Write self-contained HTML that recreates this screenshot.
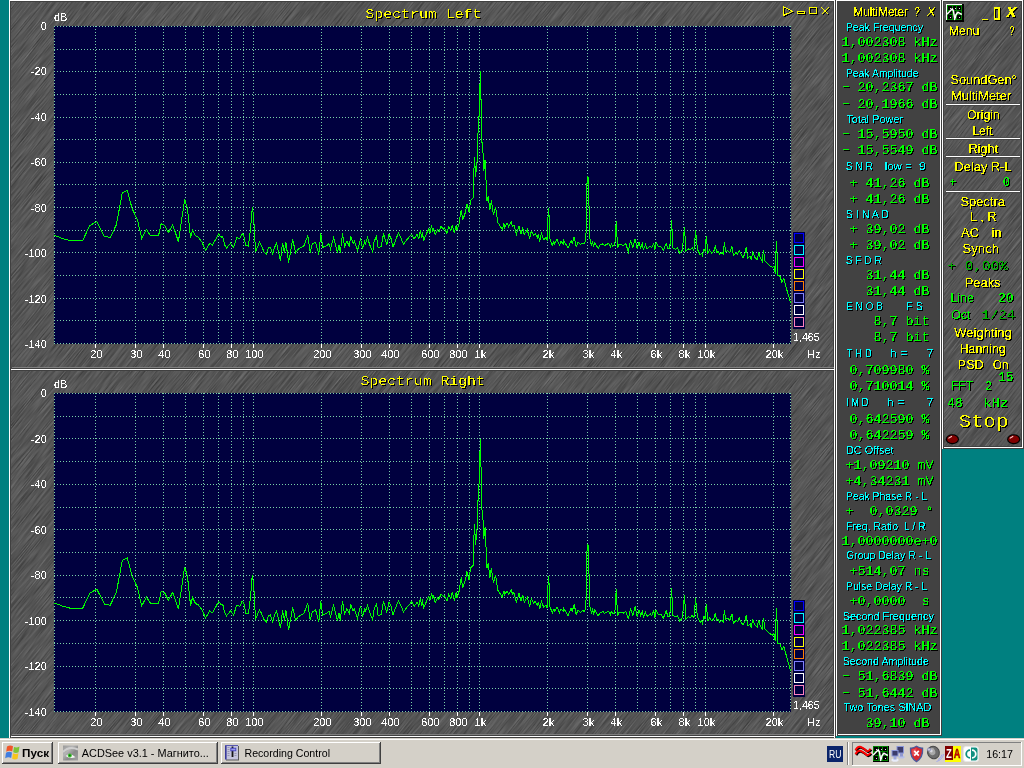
<!DOCTYPE html>
<html lang="ru"><head><meta charset="utf-8"><title>Spectrum Analyzer</title>
<style>
html,body{margin:0;padding:0;background:#008080;overflow:hidden}
svg{display:block}
text{font-family:"Liberation Sans", Arial, sans-serif;white-space:pre}
.grid{stroke:#7ad0a8;stroke-width:1;stroke-dasharray:1 2;fill:none;shape-rendering:crispEdges}
.trace{stroke:#00ff00;stroke-width:1;fill:none;shape-rendering:crispEdges;stroke-linejoin:miter}
.axl{font-size:11px;fill:#fff}
.ttl{font-family:"Liberation Mono", "Courier New", monospace;font-size:12.5px;fill:#ffff00}
.y12{font-size:12.6px;fill:#ffff00;stroke:#ffff00;stroke-width:0.15px}
.yi{font-size:12px;fill:#ffff00;font-style:italic}
.yib{font-size:14px;fill:#ffff00;font-style:italic;font-weight:bold;stroke:#ffff00;stroke-width:0.3px}
.cy{font-size:10.67px;fill:#00ffff}
.gm{font-family:"Liberation Mono", "Courier New", monospace;font-size:12.2px;fill:#00ff00;stroke:#00ff00;stroke-width:0.2px}
.ga{font-size:12.6px;fill:#00ff00;stroke:#00ff00;stroke-width:0.15px}
.gd{font-family:"Liberation Mono", "Courier New", monospace;font-size:13.1px;fill:#00b000;stroke:#00b000;stroke-width:0.2px}
.gc{font-family:"Liberation Mono", "Courier New", monospace;font-size:13.1px;fill:#00ff00;stroke:#00ff00;stroke-width:0.2px}
.stop{font-family:"Liberation Mono", "Courier New", monospace;font-size:18.5px;fill:#ffff00}
.tb{font-family:"Liberation Sans",Tahoma,sans-serif;font-size:11.5px;fill:#000}
.tbb{font-family:"Liberation Sans",Tahoma,sans-serif;font-size:11.5px;font-weight:bold;fill:#000}
</style></head><body>
<svg width="1024" height="768" viewBox="0 0 1024 768">
<defs>
<filter id="sh" x="-5%" y="-20%" width="115%" height="150%" color-interpolation-filters="sRGB"><feComponentTransfer in="SourceGraphic" result="t"><feFuncA type="discrete" tableValues="0 0 0 0 0 0 0 0 0 0 0 0 0 0 0 0 0 0 0 0 0 0 0 0 0 0 0 0 0 1 1 1 1 1 1 1 1 1 1 1 1 1 1 1 1 1 1 1 1 1"/></feComponentTransfer><feOffset in="t" dx="1" dy="1" result="o"/><feColorMatrix in="o" type="matrix" values="0 0 0 0 0  0 0 0 0 0  0 0 0 0 0  0 0 0 1 0" result="s"/><feMerge><feMergeNode in="s"/><feMergeNode in="t"/></feMerge></filter>
<filter id="sh5" x="-5%" y="-20%" width="115%" height="150%" color-interpolation-filters="sRGB"><feComponentTransfer in="SourceGraphic" result="t"><feFuncA type="discrete" tableValues="0 1"/></feComponentTransfer><feOffset in="t" dx="1" dy="1" result="o"/><feColorMatrix in="o" type="matrix" values="0 0 0 0 0  0 0 0 0 0  0 0 0 0 0  0 0 0 1 0" result="s"/><feMerge><feMergeNode in="s"/><feMergeNode in="t"/></feMerge></filter>
<filter id="sh2" x="-5%" y="-20%" width="115%" height="150%" color-interpolation-filters="sRGB"><feComponentTransfer in="SourceGraphic" result="t"><feFuncA type="discrete" tableValues="0 0 0 1 1"/></feComponentTransfer><feOffset in="t" dx="1" dy="1" result="o"/><feColorMatrix in="o" type="matrix" values="0 0 0 0 0  0 0 0 0 0  0 0 0 0 0  0 0 0 1 0" result="s"/><feMerge><feMergeNode in="s"/><feMergeNode in="t"/></feMerge></filter>
<filter id="tex" x="0" y="0" width="100%" height="100%" color-interpolation-filters="sRGB"><feTurbulence type="fractalNoise" baseFrequency="0.035 1.1" numOctaves="2" seed="7" result="n"/><feColorMatrix type="matrix" values="0.3 0 0 0 0.185  0.3 0 0 0 0.185  0.3 0 0 0 0.185  0 0 0 0 1"/></filter>
<filter id="np" x="-5%" y="-5%" width="110%" height="110%"><feComponentTransfer><feFuncA type="discrete" tableValues="0 1"/></feComponentTransfer></filter>
<filter id="nt" x="-2%" y="-10%" width="104%" height="120%"><feOffset dx="0" dy="0"/></filter>
<clipPath id="cw"><rect x="11" y="2" width="823" height="736"/></clipPath>
<clipPath id="cc"><rect x="944" y="2" width="78" height="445"/></clipPath>
</defs>
<rect width="1024" height="768" fill="#008080"/>
<rect x="9" y="0" width="827" height="738" fill="#404040"/>
<rect x="11" y="2" width="822" height="736" fill="#5a5a5a"/>
<g clip-path="url(#cw)"><rect x="-190" y="-240" width="1224" height="1224" transform="rotate(-51 422 370)" fill="#000" filter="url(#tex)" opacity="1"/></g>
<path d="M9.5 738V0.5H834.5V738" stroke="#fff" fill="none" shape-rendering="crispEdges"/>
<path d="M11 1.5H834M10.5 1V738M833.5 1V738M835.5 0V738" stroke="#404040" fill="none" shape-rendering="crispEdges"/>
<rect x="12" y="367" width="822" height="1" fill="#808080"/>
<rect x="12" y="368" width="822" height="1" fill="#404040"/>
<rect x="11" y="369" width="823" height="1" fill="#fff"/>
<rect x="12" y="370" width="822" height="1" fill="#404040"/>
<rect x="12" y="734" width="822" height="1" fill="#808080"/>
<rect x="12" y="735" width="822" height="1" fill="#404040"/>
<rect x="11" y="736" width="823" height="1" fill="#fff"/>
<rect x="12" y="737" width="822" height="1" fill="#404040"/>
<rect x="54" y="26" width="737" height="318" fill="#00003f"/>
<path class="grid" d="M54 26.5H791M54 49.5H791M54 71.5H791M54 94.5H791M54 117.5H791M54 139.5H791M54 162.5H791M54 184.5H791M54 207.5H791M54 230.5H791M54 252.5H791M54 275.5H791M54 298.5H791M54 320.5H791M54 343.5H791"/>
<path class="grid" d="M54.5 26V343M95.5 26V343M135.5 26V343M163.5 26V343M185.5 26V343M203.5 26V343M218.5 26V343M231.5 26V343M243.5 26V343M253.5 26V343M321.5 26V343M361.5 26V343M389.5 26V343M411.5 26V343M429.5 26V343M444.5 26V343M457.5 26V343M469.5 26V343M479.5 26V343M547.5 26V343M587.5 26V343M615.5 26V343M637.5 26V343M655.5 26V343M670.5 26V343M683.5 26V343M695.5 26V343M705.5 26V343M773.5 26V343M790.5 26V343"/>
<path d="M95.5 344V348M135.5 344V348M163.5 344V348M203.5 344V348M231.5 344V348M253.5 344V348M321.5 344V348M361.5 344V348M389.5 344V348M429.5 344V348M457.5 344V348M479.5 344V348M547.5 344V348M587.5 344V348M615.5 344V348M655.5 344V348M683.5 344V348M705.5 344V348M773.5 344V348" stroke="#fff" stroke-width="1" shape-rendering="crispEdges" fill="none"/>
<polyline class="trace" points="54.4,235.3 63.3,238.8 69.5,240.3 82.8,240.3 89.8,225.5 96.9,221.6 104.4,236.4 110.2,237.5 116.4,224.7 122.3,192.7 127.3,190.3 132.0,208.3 137.5,220.0 141.7,238.3 146.4,229.4 150.3,235.3 158.6,235.3 161.2,223.6 164.8,225.5 168.4,232.5 172.7,224.7 178.4,241.6 184.7,199.4 187.5,209.0 190.6,238.3 192.5,229.7 195.6,236.0 198.1,236.9 202.3,242.7 205.5,250.5 209.7,243.4 212.5,245.0 218.8,233.8 221.0,237.2 222.7,236.4 224.7,245.0 226.6,248.1 230.5,243.1 233.6,247.3 236.7,237.5 239.8,238.8 242.2,233.3 243.8,235.6 245.8,245.5 248.4,246.1 250.5,229.4 252.3,207.2 253.4,215.3 254.2,226.2 255.5,252.0 259.4,242.2 261.2,245.0 264.0,252.0 266.4,254.4 268.3,248.1 270.3,247.3 272.7,254.4 274.2,248.1 276.6,243.4 280.5,260.6 282.5,242.7 284.4,252.8 285.9,242.2 288.6,262.5 292.7,239.5 295.6,252.8 298.4,248.9 303.9,245.8 307.8,235.6 310.2,252.5 312.2,244.2 315.6,242.2 318.8,254.4 320.8,233.3 322.7,247.3 326.6,245.8 328.9,243.4 330.5,248.9 333.6,237.5 337.5,252.8 339.1,245.0 340.3,252.8 342.5,233.3 344.5,246.6 346.9,241.1 349.2,245.8 350.8,236.4 353.1,243.4 354.4,241.1 357.5,250.5 360.6,238.4 362.5,248.9 364.8,241.1 365.6,243.4 367.5,237.5 369.5,244.2 372.7,252.0 374.2,241.1 376.6,236.4 378.1,248.1 381.2,246.6 383.6,233.3 386.7,245.0 389.1,234.1 390.9,238.0 393.0,247.3 396.1,238.8 398.4,233.3 400.8,237.5 403.4,244.2 407.0,239.5 411.7,234.1 414.1,238.8 417.2,234.4 418.8,238.8 420.3,230.6 421.9,238.0 422.7,231.7 423.4,241.1 426.6,233.3 428.9,228.6 430.0,232.5 431.6,225.5 432.8,231.7 433.6,227.8 435.2,234.8 437.5,230.2 439.0,231.7 440.9,226.6 443.8,229.4 444.5,228.1 446.9,233.3 448.8,226.6 450.8,230.9 452.3,224.7 454.4,233.3 456.2,224.7 457.0,230.2 458.9,224.7 461.2,209.8 462.8,220.0 465.6,211.9 466.9,203.6 469.0,212.2 470.6,200.5 473.4,197.5 473.5,177.2 474.6,156.7 475.5,177.2 476.9,163.5 477.5,154.7 478.4,117.6 479.3,116.0 480.3,71.5 481.2,106.9 481.6,107.0 481.8,142.0 482.7,144.0 483.7,171.3 485.1,159.6 485.7,179.1 486.6,181.1 487.0,200.6 488.3,195.8 489.8,210.3 491.4,200.5 493.4,215.3 495.6,207.5 497.7,222.3 502.3,229.4 503.9,223.4 504.7,227.3 507.0,223.1 508.6,226.6 511.2,221.9 512.5,226.6 514.0,225.0 516.4,234.4 519.0,225.8 521.0,233.6 522.7,227.3 524.2,234.4 527.3,229.7 529.7,239.0 531.2,231.2 533.6,235.2 535.2,233.6 537.5,237.5 538.3,234.4 539.8,241.4 541.4,233.6 543.8,239.8 546.0,237.5 547.3,240.6 547.7,221.9 548.6,208.1 549.4,221.9 549.7,238.3 552.3,245.3 553.9,241.4 554.7,243.8 557.0,239.0 559.4,245.3 560.9,241.4 563.3,243.8 563.8,240.6 565.6,243.8 568.0,248.1 571.1,240.6 572.2,243.8 574.2,236.7 576.2,246.9 578.1,242.2 580.5,244.5 582.8,243.0 584.4,243.8 585.9,239.8 586.4,207.8 587.2,176.6 588.8,178.1 589.0,206.2 589.8,238.3 591.4,245.3 592.5,242.2 593.8,246.1 594.8,242.5 598.1,248.4 600.0,245.0 603.1,243.8 604.4,245.6 608.6,243.4 610.6,247.2 611.2,243.8 612.8,246.1 614.8,245.3 615.6,234.4 616.2,221.1 616.9,234.4 617.5,248.4 619.0,244.5 623.4,245.3 625.8,243.8 628.4,251.6 630.5,240.3 632.8,247.7 635.2,238.8 637.2,249.2 639.0,242.2 640.6,247.7 642.3,243.9 643.4,249.4 645.5,244.7 647.0,248.6 650.2,246.2 651.7,247.8 653.8,243.1 654.8,250.2 656.1,242.3 658.0,246.2 661.1,247.0 663.4,250.2 666.2,243.4 668.1,249.0 669.7,248.6 670.8,234.5 671.6,220.5 672.3,235.3 672.8,247.8 675.9,249.4 677.5,247.8 679.8,253.3 682.2,250.2 683.4,240.0 684.4,227.2 685.3,240.0 685.8,251.2 688.4,249.0 690.0,250.2 692.3,247.5 693.9,250.2 694.7,241.6 695.6,230.3 696.6,241.6 697.5,249.4 700.2,254.8 701.7,253.3 702.5,255.6 704.0,248.6 705.3,251.7 706.2,236.1 707.2,246.2 708.0,253.3 709.5,250.2 711.9,253.3 714.2,250.2 715.3,245.5 716.6,252.5 718.1,251.7 719.7,254.4 722.0,252.5 723.3,254.1 724.4,242.3 725.6,251.7 727.5,250.6 729.8,252.5 731.9,246.2 733.4,255.6 736.1,252.5 737.7,254.1 739.2,250.2 740.8,253.8 743.1,257.5 745.0,253.3 746.2,247.5 747.8,258.0 750.2,256.4 751.2,259.5 752.8,252.2 754.8,257.2 757.2,259.5 758.8,252.2 760.0,257.2 762.2,261.1 763.4,250.2 765.0,261.1 769.7,265.8 772.8,267.3 774.0,265.8 775.2,273.6 775.6,258.8 776.6,240.8 777.2,258.8 777.5,275.9 779.8,275.9 781.9,282.2 783.8,278.3 787.7,293.1 790.8,303.3"/>
<rect x="793" y="232" width="12" height="97" fill="#00003f"/>
<rect x="794.5" y="233.5" width="9" height="9" fill="none" stroke="#0000ff" stroke-width="1" shape-rendering="crispEdges"/>
<rect x="794.5" y="245.5" width="9" height="9" fill="none" stroke="#00ffff" stroke-width="1" shape-rendering="crispEdges"/>
<rect x="794.5" y="257.5" width="9" height="9" fill="none" stroke="#ff00ff" stroke-width="1" shape-rendering="crispEdges"/>
<rect x="794.5" y="269.5" width="9" height="9" fill="none" stroke="#ffff00" stroke-width="1" shape-rendering="crispEdges"/>
<rect x="794.5" y="281.5" width="9" height="9" fill="none" stroke="#ff8000" stroke-width="1" shape-rendering="crispEdges"/>
<rect x="794.5" y="293.5" width="9" height="9" fill="none" stroke="#8080ff" stroke-width="1" shape-rendering="crispEdges"/>
<rect x="794.5" y="305.5" width="9" height="9" fill="none" stroke="#ffffff" stroke-width="1" shape-rendering="crispEdges"/>
<rect x="794.5" y="317.5" width="9" height="9" fill="none" stroke="#ff80c0" stroke-width="1" shape-rendering="crispEdges"/>
<g filter="url(#np)">
<text x="96.4" y="358.0" class="axl" text-anchor="middle">20</text>
<text x="136.4" y="358.0" class="axl" text-anchor="middle">30</text>
<text x="164.4" y="358.0" class="axl" text-anchor="middle">40</text>
<text x="204.4" y="358.0" class="axl" text-anchor="middle">60</text>
<text x="232.4" y="358.0" class="axl" text-anchor="middle">80</text>
<text x="254.4" y="358.0" class="axl" text-anchor="middle">100</text>
<text x="322.4" y="358.0" class="axl" text-anchor="middle">200</text>
<text x="362.4" y="358.0" class="axl" text-anchor="middle">300</text>
<text x="390.4" y="358.0" class="axl" text-anchor="middle">400</text>
<text x="430.4" y="358.0" class="axl" text-anchor="middle">600</text>
<text x="458.4" y="358.0" class="axl" text-anchor="middle">800</text>
<text x="480.4" y="358.0" class="axl" text-anchor="middle">1k</text>
<text x="548.4" y="358.0" class="axl" text-anchor="middle">2k</text>
<text x="588.4" y="358.0" class="axl" text-anchor="middle">3k</text>
<text x="616.4" y="358.0" class="axl" text-anchor="middle">4k</text>
<text x="656.4" y="358.0" class="axl" text-anchor="middle">6k</text>
<text x="684.4" y="358.0" class="axl" text-anchor="middle">8k</text>
<text x="706.4" y="358.0" class="axl" text-anchor="middle">10k</text>
<text x="774.4" y="358.0" class="axl" text-anchor="middle">20k</text>
<text x="46.8" y="30.0" class="axl" text-anchor="end">0</text>
<text x="46.8" y="75.0" class="axl" text-anchor="end">-20</text>
<text x="46.8" y="121.0" class="axl" text-anchor="end">-40</text>
<text x="46.8" y="166.0" class="axl" text-anchor="end">-60</text>
<text x="46.8" y="212.0" class="axl" text-anchor="end">-80</text>
<text x="46.8" y="257.0" class="axl" text-anchor="end">-100</text>
<text x="46.8" y="303.0" class="axl" text-anchor="end">-120</text>
<text x="46.8" y="348.0" class="axl" text-anchor="end">-140</text>
<text x="54.0" y="21.0" class="axl">dB</text>
<text x="793.3" y="341.0" class="axl" textLength="26.2" lengthAdjust="spacingAndGlyphs">1,465</text>
<text x="807.5" y="358.0" class="axl" textLength="13.0" lengthAdjust="spacingAndGlyphs">Hz</text>
</g>
<g filter="url(#sh)"><text x="365.3" y="18.0" class="ttl" textLength="116.2" lengthAdjust="spacingAndGlyphs">Spectrum Left</text></g>
<rect x="54" y="393" width="737" height="319" fill="#00003f"/>
<path class="grid" d="M54 393.5H791M54 416.5H791M54 438.5H791M54 461.5H791M54 484.5H791M54 507.5H791M54 529.5H791M54 552.5H791M54 575.5H791M54 597.5H791M54 620.5H791M54 643.5H791M54 666.5H791M54 688.5H791M54 711.5H791"/>
<path class="grid" d="M54.5 393V711M95.5 393V711M135.5 393V711M163.5 393V711M185.5 393V711M203.5 393V711M218.5 393V711M231.5 393V711M243.5 393V711M253.5 393V711M321.5 393V711M361.5 393V711M389.5 393V711M411.5 393V711M429.5 393V711M444.5 393V711M457.5 393V711M469.5 393V711M479.5 393V711M547.5 393V711M587.5 393V711M615.5 393V711M637.5 393V711M655.5 393V711M670.5 393V711M683.5 393V711M695.5 393V711M705.5 393V711M773.5 393V711M790.5 393V711"/>
<path d="M95.5 712V716M135.5 712V716M163.5 712V716M203.5 712V716M231.5 712V716M253.5 712V716M321.5 712V716M361.5 712V716M389.5 712V716M429.5 712V716M457.5 712V716M479.5 712V716M547.5 712V716M587.5 712V716M615.5 712V716M655.5 712V716M683.5 712V716M705.5 712V716M773.5 712V716" stroke="#fff" stroke-width="1" shape-rendering="crispEdges" fill="none"/>
<polyline class="trace" points="54.4,603.0 63.3,606.4 69.5,608.0 82.8,608.0 89.8,593.1 96.9,589.2 104.4,604.1 110.2,605.2 116.4,592.3 122.3,560.2 127.3,557.8 132.0,575.9 137.5,587.6 141.7,606.0 146.4,597.0 150.3,603.0 158.6,603.0 161.2,591.2 164.8,593.1 168.4,600.2 172.7,592.3 178.4,609.3 184.7,566.9 187.5,576.6 190.6,606.0 192.5,597.3 195.6,603.7 198.1,604.6 202.3,610.4 205.5,618.2 209.7,611.1 212.5,612.7 218.8,601.4 221.0,604.9 222.7,604.1 224.7,612.7 226.6,615.8 230.5,610.8 233.6,615.0 236.7,605.2 239.8,606.4 242.2,601.0 243.8,603.3 245.8,613.2 248.4,613.8 250.5,597.0 252.3,574.8 253.4,582.9 254.2,593.9 255.5,619.7 259.4,609.9 261.2,612.7 264.0,619.7 266.4,622.1 268.3,615.8 270.3,615.0 272.7,622.1 274.2,615.8 276.6,611.1 280.5,628.3 282.5,610.4 284.4,620.5 285.9,609.9 288.6,630.2 292.7,607.2 295.6,620.5 298.4,616.6 303.9,613.5 307.8,603.3 310.2,620.2 312.2,611.9 315.6,609.9 318.8,622.1 320.8,601.0 322.7,615.0 326.6,613.5 328.9,611.1 330.5,616.6 333.6,605.2 337.5,620.5 339.1,612.7 340.3,620.5 342.5,601.0 344.5,614.3 346.9,608.8 349.2,613.5 350.8,604.1 353.1,611.1 354.4,608.8 357.5,618.2 360.6,606.1 362.5,616.6 364.8,608.8 365.6,611.1 367.5,605.2 369.5,611.9 372.7,619.7 374.2,608.8 376.6,604.1 378.1,615.8 381.2,614.3 383.6,601.0 386.7,612.7 389.1,601.8 390.9,605.7 393.0,615.0 396.1,606.4 398.4,601.0 400.8,605.2 403.4,611.9 407.0,607.2 411.7,601.8 414.1,606.4 417.2,602.1 418.8,606.4 420.3,598.2 421.9,605.7 422.7,599.3 423.4,608.8 426.6,601.0 428.9,596.2 430.0,600.2 431.6,593.1 432.8,599.3 433.6,595.4 435.2,602.5 437.5,597.8 439.0,599.3 440.9,594.2 443.8,597.0 444.5,595.7 446.9,601.0 448.8,594.2 450.8,598.5 452.3,592.3 454.4,601.0 456.2,592.3 457.0,597.8 458.9,592.3 461.2,577.4 462.8,587.6 465.6,579.5 466.9,571.2 469.0,579.8 470.6,568.1 473.4,565.0 473.5,544.7 474.6,524.1 475.5,544.7 476.9,530.9 477.5,522.1 478.4,484.9 479.3,483.3 480.3,438.6 481.2,474.2 481.6,474.3 481.8,509.4 482.7,511.4 483.7,538.8 485.1,527.0 485.7,546.6 486.6,548.6 487.0,568.2 488.3,563.3 489.8,577.9 491.4,568.1 493.4,582.9 495.6,575.1 497.7,589.9 502.3,597.0 503.9,591.0 504.7,594.9 507.0,590.7 508.6,594.2 511.2,589.5 512.5,594.2 514.0,592.6 516.4,602.1 519.0,593.4 521.0,601.3 522.7,594.9 524.2,602.1 527.3,597.3 529.7,606.7 531.2,598.9 533.6,602.9 535.2,601.3 537.5,605.2 538.3,602.1 539.8,609.1 541.4,601.3 543.8,607.5 546.0,605.2 547.3,608.3 547.7,589.5 548.6,575.7 549.4,589.5 549.7,606.0 552.3,613.0 553.9,609.1 554.7,611.4 557.0,606.7 559.4,613.0 560.9,609.1 563.3,611.4 563.8,608.3 565.6,611.4 568.0,615.8 571.1,608.3 572.2,611.4 574.2,604.4 576.2,614.6 578.1,609.9 580.5,612.2 582.8,610.7 584.4,611.4 585.9,607.5 586.4,575.4 587.2,544.1 588.8,545.6 589.0,573.8 589.8,606.0 591.4,613.0 592.5,609.9 593.8,613.8 594.8,610.2 598.1,616.1 600.0,612.7 603.1,611.4 604.4,613.3 608.6,611.1 610.6,614.9 611.2,611.4 612.8,613.8 614.8,613.0 615.6,602.1 616.2,588.7 616.9,602.1 617.5,616.1 619.0,612.2 623.4,613.0 625.8,611.4 628.4,619.3 630.5,608.0 632.8,615.4 635.2,606.4 637.2,616.9 639.0,609.9 640.6,615.4 642.3,611.6 643.4,617.1 645.5,612.4 647.0,616.3 650.2,613.9 651.7,615.5 653.8,610.8 654.8,617.9 656.1,610.0 658.0,613.9 661.1,614.7 663.4,617.9 666.2,611.1 668.1,616.7 669.7,616.3 670.8,602.2 671.6,588.1 672.3,603.0 672.8,615.5 675.9,617.1 677.5,615.5 679.8,621.0 682.2,617.9 683.4,607.7 684.4,594.8 685.3,607.7 685.8,619.0 688.4,616.7 690.0,617.9 692.3,615.2 693.9,617.9 694.7,609.3 695.6,597.9 696.6,609.3 697.5,617.1 700.2,622.5 701.7,621.0 702.5,623.3 704.0,616.3 705.3,619.4 706.2,603.8 707.2,613.9 708.0,621.0 709.5,617.9 711.9,621.0 714.2,617.9 715.3,613.2 716.6,620.2 718.1,619.4 719.7,622.1 722.0,620.2 723.3,621.8 724.4,610.0 725.6,619.4 727.5,618.3 729.8,620.2 731.9,613.9 733.4,623.3 736.1,620.2 737.7,621.8 739.2,617.9 740.8,621.5 743.1,625.2 745.0,621.0 746.2,615.2 747.8,625.7 750.2,624.1 751.2,627.2 752.8,619.9 754.8,624.9 757.2,627.2 758.8,619.9 760.0,624.9 762.2,628.8 763.4,617.9 765.0,628.8 769.7,633.6 772.8,635.1 774.0,633.6 775.2,641.4 775.6,626.5 776.6,608.5 777.2,626.5 777.5,643.7 779.8,643.7 781.9,650.0 783.8,646.1 787.7,660.9 790.8,671.2"/>
<rect x="793" y="600" width="12" height="97" fill="#00003f"/>
<rect x="794.5" y="601.5" width="9" height="9" fill="none" stroke="#0000ff" stroke-width="1" shape-rendering="crispEdges"/>
<rect x="794.5" y="613.5" width="9" height="9" fill="none" stroke="#00ffff" stroke-width="1" shape-rendering="crispEdges"/>
<rect x="794.5" y="625.5" width="9" height="9" fill="none" stroke="#ff00ff" stroke-width="1" shape-rendering="crispEdges"/>
<rect x="794.5" y="637.5" width="9" height="9" fill="none" stroke="#ffff00" stroke-width="1" shape-rendering="crispEdges"/>
<rect x="794.5" y="649.5" width="9" height="9" fill="none" stroke="#ff8000" stroke-width="1" shape-rendering="crispEdges"/>
<rect x="794.5" y="661.5" width="9" height="9" fill="none" stroke="#8080ff" stroke-width="1" shape-rendering="crispEdges"/>
<rect x="794.5" y="673.5" width="9" height="9" fill="none" stroke="#ffffff" stroke-width="1" shape-rendering="crispEdges"/>
<rect x="794.5" y="685.5" width="9" height="9" fill="none" stroke="#ff80c0" stroke-width="1" shape-rendering="crispEdges"/>
<g filter="url(#np)">
<text x="96.4" y="726.0" class="axl" text-anchor="middle">20</text>
<text x="136.4" y="726.0" class="axl" text-anchor="middle">30</text>
<text x="164.4" y="726.0" class="axl" text-anchor="middle">40</text>
<text x="204.4" y="726.0" class="axl" text-anchor="middle">60</text>
<text x="232.4" y="726.0" class="axl" text-anchor="middle">80</text>
<text x="254.4" y="726.0" class="axl" text-anchor="middle">100</text>
<text x="322.4" y="726.0" class="axl" text-anchor="middle">200</text>
<text x="362.4" y="726.0" class="axl" text-anchor="middle">300</text>
<text x="390.4" y="726.0" class="axl" text-anchor="middle">400</text>
<text x="430.4" y="726.0" class="axl" text-anchor="middle">600</text>
<text x="458.4" y="726.0" class="axl" text-anchor="middle">800</text>
<text x="480.4" y="726.0" class="axl" text-anchor="middle">1k</text>
<text x="548.4" y="726.0" class="axl" text-anchor="middle">2k</text>
<text x="588.4" y="726.0" class="axl" text-anchor="middle">3k</text>
<text x="616.4" y="726.0" class="axl" text-anchor="middle">4k</text>
<text x="656.4" y="726.0" class="axl" text-anchor="middle">6k</text>
<text x="684.4" y="726.0" class="axl" text-anchor="middle">8k</text>
<text x="706.4" y="726.0" class="axl" text-anchor="middle">10k</text>
<text x="774.4" y="726.0" class="axl" text-anchor="middle">20k</text>
<text x="46.8" y="397.0" class="axl" text-anchor="end">0</text>
<text x="46.8" y="443.0" class="axl" text-anchor="end">-20</text>
<text x="46.8" y="488.0" class="axl" text-anchor="end">-40</text>
<text x="46.8" y="534.0" class="axl" text-anchor="end">-60</text>
<text x="46.8" y="579.0" class="axl" text-anchor="end">-80</text>
<text x="46.8" y="625.0" class="axl" text-anchor="end">-100</text>
<text x="46.8" y="670.0" class="axl" text-anchor="end">-120</text>
<text x="46.8" y="716.0" class="axl" text-anchor="end">-140</text>
<text x="54.0" y="388.0" class="axl">dB</text>
<text x="793.3" y="709.0" class="axl" textLength="26.2" lengthAdjust="spacingAndGlyphs">1,465</text>
<text x="807.5" y="726.0" class="axl" textLength="13.0" lengthAdjust="spacingAndGlyphs">Hz</text>
</g>
<g filter="url(#sh)"><text x="360.4" y="385.0" class="ttl" textLength="124.5" lengthAdjust="spacingAndGlyphs">Spectrum Right</text></g>
<g filter="url(#sh)" stroke="#ffff00" fill="none" stroke-width="1" shape-rendering="crispEdges">
<path d="M783.5 7V15.5L792.5 11.2Z" stroke-width="1"/>
<rect x="797.5" y="11.5" width="7" height="2"/>
<rect x="809.5" y="7.5" width="7" height="6"/>
<path d="M821.5 7.5L828.5 14.5M828.5 7.5L821.5 14.5"/>
</g>
<rect x="836" y="0" width="106" height="736" fill="#404040"/>
<rect x="838" y="2" width="101" height="732" fill="#424242"/>
<path d="M836.5 736V0.5H940.5V735M838 734.5H941" stroke="#fff" fill="none" shape-rendering="crispEdges"/>
<path d="M941.5 0V736M837 735.5H942" stroke="#404040" fill="none" shape-rendering="crispEdges"/>
<g filter="url(#sh)">
<text x="853.5" y="15.5" class="y12" textLength="54.5" lengthAdjust="spacingAndGlyphs">MultiMeter</text>
<text x="914.3" y="15.5" class="y12" textLength="5.7" lengthAdjust="spacingAndGlyphs">?</text>
<text x="926.8" y="15.5" class="yi" textLength="8.7" lengthAdjust="spacingAndGlyphs">X</text>
</g><g filter="url(#sh5)">
<text x="845.7" y="31.0" class="cy" textLength="77.3" lengthAdjust="spacingAndGlyphs">Peak Frequency</text>
<text x="845.7" y="76.7" class="cy" textLength="72.8" lengthAdjust="spacingAndGlyphs">Peak Amplitude</text>
<text x="846.3" y="122.5" class="cy" textLength="56.7" lengthAdjust="spacingAndGlyphs">Total Power</text>
<text x="845.7" y="169.8" class="cy" textLength="27.3" lengthAdjust="spacingAndGlyphs">S N R</text>
<text x="884.7" y="169.8" class="cy" textLength="27.1" lengthAdjust="spacingAndGlyphs">low =</text>
<text x="918.8" y="169.8" class="cy" textLength="7.2" lengthAdjust="spacingAndGlyphs">9</text>
<text x="845.7" y="217.8" class="cy" textLength="43.3" lengthAdjust="spacingAndGlyphs">S I N A D</text>
<text x="845.7" y="264.0" class="cy" textLength="36.1" lengthAdjust="spacingAndGlyphs">S F D R</text>
<text x="845.7" y="309.8" class="cy" textLength="37.3" lengthAdjust="spacingAndGlyphs">E N O B</text>
<text x="906.3" y="309.8" class="cy" textLength="16.7" lengthAdjust="spacingAndGlyphs">F S</text>
<text x="846.3" y="356.8" class="cy" textLength="25.5" lengthAdjust="spacingAndGlyphs">T H D</text>
<text x="889.7" y="356.8" class="cy" textLength="18.3" lengthAdjust="spacingAndGlyphs">h =</text>
<text x="926.8" y="356.8" class="cy" textLength="6.7" lengthAdjust="spacingAndGlyphs">7</text>
<text x="846.0" y="406.0" class="cy" textLength="22.5" lengthAdjust="spacingAndGlyphs">I M D</text>
<text x="886.8" y="406.0" class="cy" textLength="17.9" lengthAdjust="spacingAndGlyphs">h =</text>
<text x="926.8" y="406.0" class="cy" textLength="6.7" lengthAdjust="spacingAndGlyphs">7</text>
<text x="846.0" y="453.5" class="cy" textLength="47.5" lengthAdjust="spacingAndGlyphs">DC Offset</text>
<text x="846.0" y="499.7" class="cy" textLength="81.3" lengthAdjust="spacingAndGlyphs">Peak Phase R - L</text>
<text x="846.0" y="529.7" class="cy" textLength="79.7" lengthAdjust="spacingAndGlyphs">Freq. Ratio  L / R</text>
<text x="846.0" y="559.3" class="cy" textLength="85.0" lengthAdjust="spacingAndGlyphs">Group Delay R - L</text>
<text x="846.0" y="589.7" class="cy" textLength="81.3" lengthAdjust="spacingAndGlyphs">Pulse Delay R - L</text>
<text x="842.7" y="619.7" class="cy" textLength="91.3" lengthAdjust="spacingAndGlyphs">Second Frequency</text>
<text x="842.7" y="665.3" class="cy" textLength="86.3" lengthAdjust="spacingAndGlyphs">Second Amplitude</text>
<text x="843.5" y="711.3" class="cy" textLength="87.8" lengthAdjust="spacingAndGlyphs">Two Tones SINAD</text>
</g><g filter="url(#sh)">
<text x="841.6" y="46.0" class="gm" textLength="96.0" lengthAdjust="spacingAndGlyphs">1,002308 kHz</text>
<text x="841.6" y="62.0" class="gm" textLength="96.0" lengthAdjust="spacingAndGlyphs">1,002308 kHz</text>
<text x="841.6" y="91.3" class="gm" textLength="96.0" lengthAdjust="spacingAndGlyphs">− 20,2367 dB</text>
<text x="841.6" y="107.5" class="gm" textLength="96.0" lengthAdjust="spacingAndGlyphs">− 20,1966 dB</text>
<text x="841.6" y="137.8" class="gm" textLength="96.0" lengthAdjust="spacingAndGlyphs">− 15,5950 dB</text>
<text x="841.6" y="153.7" class="gm" textLength="96.0" lengthAdjust="spacingAndGlyphs">− 15,5549 dB</text>
<text x="849.6" y="187.0" class="gm" textLength="80.0" lengthAdjust="spacingAndGlyphs">+ 41,26 dB</text>
<text x="849.6" y="202.8" class="gm" textLength="80.0" lengthAdjust="spacingAndGlyphs">+ 41,26 dB</text>
<text x="849.6" y="232.7" class="gm" textLength="80.0" lengthAdjust="spacingAndGlyphs">+ 39,02 dB</text>
<text x="849.6" y="248.7" class="gm" textLength="80.0" lengthAdjust="spacingAndGlyphs">+ 39,02 dB</text>
<text x="849.6" y="279.0" class="gm" textLength="80.0" lengthAdjust="spacingAndGlyphs">  31,44 dB</text>
<text x="849.6" y="294.8" class="gm" textLength="80.0" lengthAdjust="spacingAndGlyphs">  31,44 dB</text>
<text x="849.6" y="324.8" class="gm" textLength="80.0" lengthAdjust="spacingAndGlyphs">   8,7 bit</text>
<text x="849.6" y="340.7" class="gm" textLength="80.0" lengthAdjust="spacingAndGlyphs">   8,7 bit</text>
<text x="849.6" y="373.5" class="gm" textLength="80.0" lengthAdjust="spacingAndGlyphs">0,709980 %</text>
<text x="849.6" y="389.7" class="gm" textLength="80.0" lengthAdjust="spacingAndGlyphs">0,710014 %</text>
<text x="849.6" y="422.7" class="gm" textLength="80.0" lengthAdjust="spacingAndGlyphs">0,642590 %</text>
<text x="849.6" y="438.5" class="gm" textLength="80.0" lengthAdjust="spacingAndGlyphs">0,642259 %</text>
<text x="845.6" y="468.8" class="gm" textLength="88.0" lengthAdjust="spacingAndGlyphs">+1,09210 mV</text>
<text x="845.6" y="485.0" class="gm" textLength="88.0" lengthAdjust="spacingAndGlyphs">+4,34231 mV</text>
<text x="845.6" y="514.7" class="gm" textLength="88.0" lengthAdjust="spacingAndGlyphs">+  0,0329 °</text>
<text x="841.6" y="544.7" class="gm" textLength="96.0" lengthAdjust="spacingAndGlyphs">1,0000000e+0</text>
<text x="849.6" y="574.5" class="gm" textLength="80.0" lengthAdjust="spacingAndGlyphs">+514,07 ns</text>
<text x="849.6" y="604.7" class="gm" textLength="80.0" lengthAdjust="spacingAndGlyphs">+0,0000  s</text>
<text x="841.6" y="634.2" class="gm" textLength="96.0" lengthAdjust="spacingAndGlyphs">1,022385 kHz</text>
<text x="841.6" y="650.3" class="gm" textLength="96.0" lengthAdjust="spacingAndGlyphs">1,022385 kHz</text>
<text x="841.6" y="680.3" class="gm" textLength="96.0" lengthAdjust="spacingAndGlyphs">− 51,6839 dB</text>
<text x="841.6" y="696.7" class="gm" textLength="96.0" lengthAdjust="spacingAndGlyphs">− 51,6442 dB</text>
<text x="849.6" y="726.7" class="gm" textLength="80.0" lengthAdjust="spacingAndGlyphs">  39,10 dB</text>
</g>
<rect x="942" y="0" width="82" height="449" fill="#404040"/>
<rect x="944" y="2" width="78" height="445" fill="#5a5a5a"/>
<g clip-path="url(#cc)"><rect x="743" y="-16" width="480" height="480" transform="rotate(-51 983 224)" fill="#000" filter="url(#tex)"/></g>
<path d="M942.5 449V0.5H1022.5V448M944 447.5H1023" stroke="#fff" fill="none" shape-rendering="crispEdges"/>
<path d="M944 1.5H1022M943.5 1V448M1021.5 2V447M944 446.5H1022M1023.5 0V449M943 448.5H1024" stroke="#404040" fill="none" shape-rendering="crispEdges"/>
<rect x="946" y="103" width="74" height="1" fill="#4c4c4c"/>
<rect x="946" y="104" width="74" height="1" fill="#fff"/>
<rect x="946" y="105" width="75" height="1" fill="#484848"/>
<rect x="946" y="137" width="74" height="1" fill="#4c4c4c"/>
<rect x="946" y="138" width="74" height="1" fill="#fff"/>
<rect x="946" y="139" width="75" height="1" fill="#484848"/>
<rect x="946" y="155" width="74" height="1" fill="#4c4c4c"/>
<rect x="946" y="156" width="74" height="1" fill="#fff"/>
<rect x="946" y="157" width="75" height="1" fill="#484848"/>
<rect x="946" y="190" width="74" height="1" fill="#4c4c4c"/>
<rect x="946" y="191" width="74" height="1" fill="#fff"/>
<rect x="946" y="192" width="75" height="1" fill="#484848"/>
<g shape-rendering="crispEdges"><rect x="946" y="4" width="18" height="18" fill="#000"/><rect x="946" y="4" width="16" height="16" fill="#fff"/><rect x="947" y="5" width="15" height="15" fill="#000"/><path d="M947 5.5H962M947.5 5V20M947 10.5H962M952.5 5V20M947 14.5H962M956.5 5V20M947 19.5H962M961.5 5V20" stroke="#008000" stroke-width="1" fill="none"/><rect x="950" y="8" width="1" height="1" fill="#f0d8f0"/><rect x="950" y="17" width="1" height="1" fill="#f0d8f0"/><rect x="955" y="8" width="1" height="1" fill="#f0d8f0"/><rect x="955" y="17" width="1" height="1" fill="#f0d8f0"/><rect x="959" y="8" width="1" height="1" fill="#f0d8f0"/><rect x="959" y="17" width="1" height="1" fill="#f0d8f0"/></g><polyline points="947.6,15.0 951.6,11.0" stroke="#000" stroke-width="1.2" fill="none"/><polyline points="947.0,14.2 952.3,8.8 953.5,11.1 954.7,19.4 956.0,14.8 957.8,12.2 960.0,13.4 961.8,14.5" stroke="#fff" stroke-width="1.5" fill="none" stroke-linejoin="round"/>
<g filter="url(#sh)">
<rect x="981.5" y="19" width="6.5" height="1.4" fill="#ffff00"/>
<rect x="994.6" y="8" width="4.6" height="11" fill="none" stroke="#ffff00" stroke-width="1.6"/>
<text x="1006.2" y="17.0" class="yib" textLength="9.8" lengthAdjust="spacingAndGlyphs">X</text>
<text x="948.8" y="34.7" class="y12" textLength="30.6" lengthAdjust="spacingAndGlyphs">Menu</text>
<text x="1009.3" y="34.7" class="y12" textLength="5.4" lengthAdjust="spacingAndGlyphs">?</text>
<text x="950.5" y="83.9" class="y12" textLength="66.1" lengthAdjust="spacingAndGlyphs">SoundGen°</text>
<text x="951.0" y="99.5" class="y12" textLength="60.2" lengthAdjust="spacingAndGlyphs">MultiMeter</text>
<text x="967.0" y="118.6" class="y12" textLength="32.8" lengthAdjust="spacingAndGlyphs">Origin</text>
<text x="972.4" y="134.6" class="y12" textLength="20.1" lengthAdjust="spacingAndGlyphs">Left</text>
<text x="968.4" y="152.6" class="y12" textLength="29.6" lengthAdjust="spacingAndGlyphs">Right</text>
<text x="954.6" y="170.7" class="y12" textLength="56.9" lengthAdjust="spacingAndGlyphs">Delay R-L</text>
<text x="960.4" y="205.5" class="y12" textLength="44.5" lengthAdjust="spacingAndGlyphs">Spectra</text>
<text x="969.9" y="220.7" class="y12" textLength="26.7" lengthAdjust="spacingAndGlyphs">L , R</text>
<text x="961.1" y="236.5" class="y12" textLength="18.0" lengthAdjust="spacingAndGlyphs">AC</text>
<text x="991.6" y="236.5" class="y12">in</text>
<text x="962.6" y="252.5" class="y12" textLength="36.4" lengthAdjust="spacingAndGlyphs">Synch</text>
<text x="964.8" y="286.5" class="y12" textLength="35.7" lengthAdjust="spacingAndGlyphs">Peaks</text>
<text x="954.3" y="336.9" class="y12" textLength="57.5" lengthAdjust="spacingAndGlyphs">Weighting</text>
<text x="959.7" y="352.9" class="y12" textLength="45.9" lengthAdjust="spacingAndGlyphs">Hanning</text>
<text x="957.8" y="368.5" class="y12" textLength="25.7" lengthAdjust="spacingAndGlyphs">PSD</text>
<text x="992.8" y="368.5" class="y12" textLength="15.7" lengthAdjust="spacingAndGlyphs">On</text>
<text x="949.0" y="186.4" class="gc" textLength="7.8" lengthAdjust="spacingAndGlyphs">+</text>
<text x="1002.7" y="186.4" class="gc" textLength="7.0" lengthAdjust="spacingAndGlyphs">0</text>
<text x="947.6" y="270.0" class="gd" textLength="60.2" lengthAdjust="spacingAndGlyphs">+ 0,00%</text>
<text x="950.5" y="302.3" class="ga" textLength="23.3" lengthAdjust="spacingAndGlyphs">Line</text>
<text x="998.0" y="302.3" class="gc" textLength="15.6" lengthAdjust="spacingAndGlyphs">20</text>
<text x="950.9" y="319.4" class="ga" textLength="19.7" lengthAdjust="spacingAndGlyphs">Oct</text>
<text x="981.6" y="319.4" class="gd" textLength="33.5" lengthAdjust="spacingAndGlyphs">1/24</text>
<text x="998.0" y="380.6" class="gc" textLength="15.6" lengthAdjust="spacingAndGlyphs">15</text>
<text x="950.9" y="389.8" class="ga" textLength="21.9" lengthAdjust="spacingAndGlyphs">FFT</text>
<text x="985.2" y="389.8" class="gc" textLength="6.6" lengthAdjust="spacingAndGlyphs">2</text>
<text x="947.3" y="407.0" class="gc" textLength="15.3" lengthAdjust="spacingAndGlyphs">48</text>
<text x="983.0" y="407.0" class="gc" textLength="25.5" lengthAdjust="spacingAndGlyphs">kHz</text>
</g>
<g filter="url(#sh2)"><text x="958.7" y="427.0" class="stop" textLength="49.8" lengthAdjust="spacingAndGlyphs">Stop</text></g>
<ellipse cx="952.4" cy="439.2" rx="6.6" ry="5" fill="#000"/>
<ellipse cx="952.4" cy="439.2" rx="5.4" ry="3.9" fill="#800000"/>
<path d="M948.4 438.4L951.9 436.2" stroke="#ffd0d0" stroke-width="1.1" fill="none"/>
<ellipse cx="1013.7" cy="439.2" rx="6.6" ry="5" fill="#000"/>
<ellipse cx="1013.7" cy="439.2" rx="5.4" ry="3.9" fill="#800000"/>
<path d="M1009.7 438.4L1013.2 436.2" stroke="#ffd0d0" stroke-width="1.1" fill="none"/>
<rect x="0" y="738" width="1024" height="30" fill="#d4d0c8"/>
<rect x="0" y="739" width="1024" height="1" fill="#fff"/>
<rect x="2" y="742" width="51" height="22" fill="#d4d0c8"/><path d="M2.5 763V742.5H52" stroke="#fff" fill="none" shape-rendering="crispEdges"/><path d="M2 763.5H52.5V742" stroke="#404040" fill="none" shape-rendering="crispEdges"/><path d="M3 762.5H51.5V743" stroke="#808080" fill="none" shape-rendering="crispEdges"/>
<rect x="58" y="742" width="160" height="22" fill="#d4d0c8"/><path d="M58.5 763V742.5H217" stroke="#fff" fill="none" shape-rendering="crispEdges"/><path d="M58 763.5H217.5V742" stroke="#404040" fill="none" shape-rendering="crispEdges"/><path d="M59 762.5H216.5V743" stroke="#808080" fill="none" shape-rendering="crispEdges"/>
<rect x="221" y="742" width="160" height="22" fill="#d4d0c8"/><path d="M221.5 763V742.5H380" stroke="#fff" fill="none" shape-rendering="crispEdges"/><path d="M221 763.5H380.5V742" stroke="#404040" fill="none" shape-rendering="crispEdges"/><path d="M222 762.5H379.5V743" stroke="#808080" fill="none" shape-rendering="crispEdges"/>
<g transform="translate(5,745)">
<path d="M2 1.5Q5 -0.5 8 1.2L7.2 6.5Q4.5 5 1.2 6.8Z" fill="#f0562a"/>
<path d="M9 2Q11.5 3.2 14.5 1.5L13.6 7.2Q11 8.6 8.2 7.2Z" fill="#7ec433"/>
<path d="M1 7.8Q4.2 6 7 7.6L6.2 13Q3.5 11.5 0.2 13.2Z" fill="#3f7de0"/>
<path d="M8 8.3Q10.7 9.7 13.4 8.3L12.6 13.8Q10 15.2 7.2 13.8Z" fill="#f8c51b"/>
</g>
<g filter="url(#nt)">
<text x="22.0" y="757.0" class="tbb" textLength="27.0" lengthAdjust="spacingAndGlyphs">Пуск</text>
<linearGradient id="ag" x1="0" y1="0" x2="1" y2="1"><stop offset="0" stop-color="#9a9a9a"/><stop offset="0.35" stop-color="#b4b4b4"/><stop offset="0.6" stop-color="#8a8a8a"/><stop offset="1" stop-color="#a2a2a2"/></linearGradient>
<rect x="63" y="745.5" width="15" height="15" fill="url(#ag)"/>
<path d="M63 752Q69 745.5 78 749.5" stroke="#cfcfcf" stroke-width="2" fill="none"/>
<path d="M65.5 756Q70 751.8 75.5 757.2Q70 759 65.5 756Z" fill="#f4f4f4"/><circle cx="69.8" cy="755.6" r="2" fill="#38c028"/><circle cx="69.8" cy="755.4" r="0.8" fill="#0a5a10"/>
<text x="81.8" y="757.0" class="tb" textLength="127.0" lengthAdjust="spacingAndGlyphs">ACDSee v3.1 - Магнито...</text>
<rect x="226" y="746" width="13" height="14.5" fill="#585858"/>
<rect x="225" y="745" width="13" height="14.5" fill="#c4c4dc"/>
<rect x="225" y="745" width="1.6" height="14.5" fill="#38389a"/><rect x="225" y="745" width="13" height="1" fill="#5a5ab0"/>
<path d="M227.5 747.5h2M227.5 749.5h2M227.5 751.5h2M227.5 753.5h2M227.5 755.5h2M234.5 753.5h2M234.5 755.5h2" stroke="#8c8ca8" stroke-width="0.8" fill="none"/>
<rect x="231.6" y="746.5" width="1.8" height="10.5" fill="#141414"/>
<rect x="230.8" y="748.2" width="5" height="2.6" fill="#9c9cec" stroke="#4040c0" stroke-width="0.9"/>
<text x="244.5" y="757.0" class="tb" textLength="85.5" lengthAdjust="spacingAndGlyphs">Recording Control</text>
<rect x="827" y="746" width="16" height="16" fill="#0a246a"/>
<text x="829.0" y="758.0" class="tb" textLength="12.4" lengthAdjust="spacingAndGlyphs" style="fill:#fff">RU</text>
<path d="M847.5 742V765" stroke="#808080" shape-rendering="crispEdges"/><path d="M848.5 742V765" stroke="#fff" shape-rendering="crispEdges"/>
<path d="M852.5 765V742.5H1021" stroke="#808080" fill="none" shape-rendering="crispEdges"/>
<path d="M852 765.5H1021.5V742" stroke="#fff" fill="none" shape-rendering="crispEdges"/>
<path d="M855.5 750.3Q857.5 746.3 860 746.8T867 751.2Q869 751.6 870.5 748.8M855.5 754.3Q857.5 750.3 860 750.8T867 755.2Q869 755.6 870.5 752.8" stroke="#000" stroke-width="2" fill="none" transform="translate(0.9,0.9)"/>
<path d="M855.5 750.3Q857.5 746.3 860 746.8T867 751.2Q869 751.6 870.5 748.8M855.5 754.3Q857.5 750.3 860 750.8T867 755.2Q869 755.6 870.5 752.8" stroke="#ff0000" stroke-width="2" fill="none"/>
<g shape-rendering="crispEdges"><rect x="873" y="746" width="16" height="16" fill="#000"/><rect x="873" y="746" width="15" height="15" fill="#000"/><path d="M873 746.5H888M873.5 746V761M873 751.5H888M878.5 746V761M873 755.5H888M882.5 746V761M873 760.5H888M887.5 746V761" stroke="#008000" stroke-width="1" fill="none"/><rect x="876" y="749" width="1" height="1" fill="#f0d8f0"/><rect x="876" y="758" width="1" height="1" fill="#f0d8f0"/><rect x="881" y="749" width="1" height="1" fill="#f0d8f0"/><rect x="881" y="758" width="1" height="1" fill="#f0d8f0"/><rect x="885" y="749" width="1" height="1" fill="#f0d8f0"/><rect x="885" y="758" width="1" height="1" fill="#f0d8f0"/></g><polyline points="873.6,756.0 877.6,752.0" stroke="#000" stroke-width="1.2" fill="none"/><polyline points="873.0,755.2 878.3,749.8 879.5,752.1 880.7,760.4 882.0,755.8 883.8,753.2 886.0,754.4 887.8,755.5" stroke="#fff" stroke-width="1.5" fill="none" stroke-linejoin="round"/>
<ellipse cx="901.5" cy="757" rx="3.2" ry="1.6" fill="#b8c0e8"/><rect x="900" y="753" width="3" height="3.5" fill="#9098d0"/>
<rect x="897" y="746.5" width="6.5" height="6.5" fill="#3c3c6c" stroke="#8a96d8" stroke-width="1"/>
<ellipse cx="895" cy="760" rx="3.6" ry="1.8" fill="#e8ecfa"/><rect x="893.5" y="756" width="3" height="3.5" fill="#a0a8dc"/>
<rect x="892" y="750.5" width="6" height="5.5" fill="#3c3c6c" stroke="#8a96d8" stroke-width="1"/>
<path d="M910.5 748.2Q913.5 748.5 916.5 746.3Q919.5 748.5 922.6 748.2Q923.2 757.5 916.5 761.6Q909.8 757.5 910.5 748.2Z" fill="#d82830" stroke="#4a5a9c" stroke-width="1.3"/>
<path d="M912.2 749.5Q914.5 749.4 916.5 748Q916.5 754 912.6 755.5Q912 752 912.2 749.5Z" fill="#f06068" opacity="0.7"/>
<path d="M914.2 750.8l4.6 4.8m0 -4.8l-4.6 4.8" stroke="#fff" stroke-width="1.7"/>
<ellipse cx="933.5" cy="752.5" rx="5.8" ry="6.4" fill="#6e6e6e" stroke="#4a4a4a" stroke-width="1" transform="rotate(-25 933.5 752.5)"/>
<ellipse cx="932" cy="751.5" rx="3.2" ry="3.8" fill="#a8a8a8" transform="rotate(-25 932 751.5)"/><circle cx="931.3" cy="751" r="1.4" fill="#d8d8e0"/><circle cx="929" cy="749.5" r="1.6" fill="#c8c8d8" stroke="#7078b0" stroke-width="0.6"/>
<path d="M938 759.5q3 -1.5 4 -5M936.5 761.5q5.5 -1.5 7.3 -7.5" stroke="#98a0f0" stroke-width="0.9" fill="none"/>
<rect x="945" y="746" width="16" height="16" fill="#ffff00"/><rect x="945" y="746" width="8" height="14" fill="#800000"/>
<text x="946.0" y="758.4" class="tbb" textLength="5.8" lengthAdjust="spacingAndGlyphs" style="fill:#fff;font-size:12.5px">Z</text>
<text x="953.7" y="758.4" class="tbb" textLength="6.6" lengthAdjust="spacingAndGlyphs" style="fill:#d00000;font-size:12.5px;stroke:#700000;stroke-width:0.4px">A</text>
<rect x="963.5" y="746.5" width="15" height="15" rx="2.5" fill="#fff" stroke="#e8e8e8"/>
<path d="M971 747.5H975.5Q977.5 747.5 977.5 749.5V758.5Q977.5 760.5 975.5 760.5H971Z" fill="#109080"/>
<path d="M970 750.2a3.8 3.8 0 0 0 0 7.6" stroke="#109080" stroke-width="1.8" fill="none"/>
<path d="M972 750.2a3.8 3.8 0 0 1 0 7.6" stroke="#fff" stroke-width="1.8" fill="none"/>
<text x="986.2" y="758.0" class="tb" textLength="26.8" lengthAdjust="spacingAndGlyphs">16:17</text>
</g>
</svg>
</body></html>
